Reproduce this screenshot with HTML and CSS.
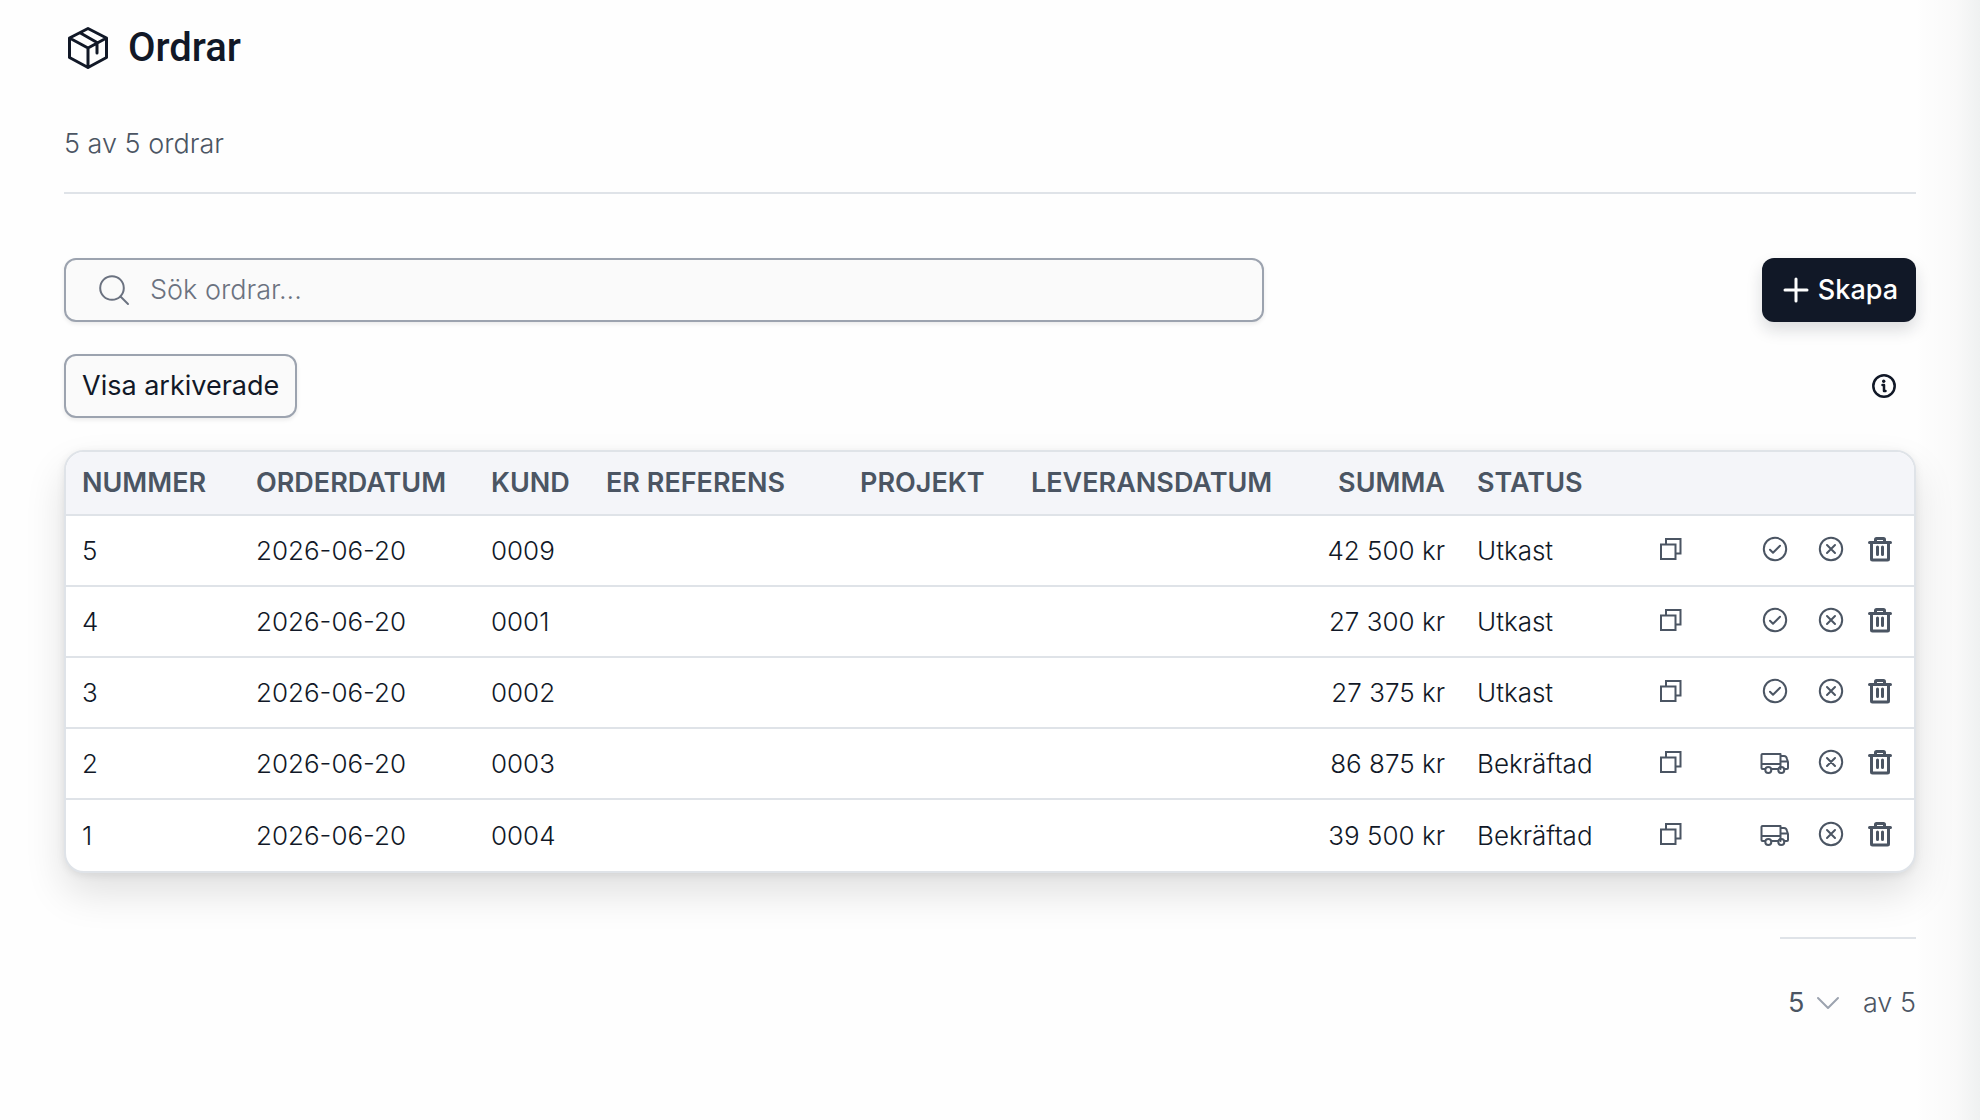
FILE: index.html
```html
<!DOCTYPE html>
<html lang="sv">
<head>
    <meta charset="UTF-8">
    <meta name="viewport" content="width=device-width, initial-scale=1.0">
    <title>Ordrar</title>
    <link rel="stylesheet" href="styles.css">
</head>
<body>
    <!-- Icon symbols shared by the rows -->
    <svg class="symbols" xmlns="http://www.w3.org/2000/svg">
        <symbol id="icon-copy" viewBox="0 0 24 24">
            <path d="M7 7V2h14.500v14.500H17M2 7.500h14.500V22H2z" />
        </symbol>
        <symbol id="icon-check" viewBox="0 0 26 26">
            <circle cx="13" cy="13" r="11.200" />
            <path d="M8 13.800l3 3 7-7" />
        </symbol>
        <symbol id="icon-cancel" viewBox="0 0 26 26">
            <circle cx="13" cy="13" r="11.200" />
            <path d="M9 9l8 8M17 9l-8 8" />
        </symbol>
        <symbol id="icon-truck" viewBox="0 0 30 26">
            <path d="M5 20H2.500a1 1 0 0 1-1-1V6a1 1 0 0 1 1-1h18v15M11.500 20h6.500M1.500 15h19M20.500 7h3.500q2.500 0 3 3l1 3v6a1 1 0 0 1-1 1h-2.500M20.500 12.500h7" />
            <circle cx="8.300" cy="21" r="3" />
            <circle cx="21.300" cy="21" r="3" />
        </symbol>
        <symbol id="icon-trash" viewBox="0 0 24 26">
            <path d="M1.500 6.500h21M3.500 7v16a1 1 0 0 0 1 1h15a1 1 0 0 0 1-1V7M7.500 6V3.500a1 1 0 0 1 1-1h7a1 1 0 0 1 1 1V6M9.500 11v7.500M14.500 11v7.500" />
        </symbol>
    </svg>

    <main class="page">
        <header class="page-header">
            <div class="title-row">
                <svg class="title-icon" viewBox="0 0 48 48">
                    <path d="M24 4.500L42.500 14v19.500L24 43.500L5.500 33.500V14zM5.500 14L24 24l18.500-10M24 24v19.500M16 8.700l17 9.800v10.500" />
                </svg>
                <h1 class="title">Ordrar</h1>
            </div>
            <p class="count">5 av 5 ordrar</p>
        </header>

        <!-- Search and create -->
        <div class="toolbar">
            <label class="search">
                <svg class="search-icon" viewBox="0 0 32 32">
                    <circle cx="14" cy="14" r="11.800" />
                    <path d="M22.500 22.500l7.500 7.500" />
                </svg>
                <input class="search-input" type="search" placeholder="Sök ordrar..." aria-label="Sök ordrar">
            </label>
            <button class="button primary" type="button">
                <svg class="plus-icon" viewBox="0 0 28 28">
                    <path d="M14 3v22M3 14h22" />
                </svg>
                Skapa
            </button>
        </div>

        <!-- Filters -->
        <div class="toolbar">
            <button class="button outline" type="button">Visa arkiverade</button>
            <button class="info" type="button" aria-label="Information">
                <svg class="info-icon" viewBox="0 0 24 24">
                    <circle cx="12" cy="12" r="10.700" />
                    <path d="M10.500 11h1.500v6h1.500" />
                    <circle class="dot" cx="11.700" cy="7.200" r="1.700" />
                </svg>
            </button>
        </div>

        <!-- Orders -->
        <div class="table-card">
            <table class="orders">
                <colgroup>
                    <col class="col-number">
                    <col class="col-date">
                    <col class="col-customer">
                    <col class="col-reference">
                    <col class="col-project">
                    <col class="col-delivery">
                    <col class="col-sum">
                    <col class="col-status">
                    <col class="col-actions">
                </colgroup>
                <thead>
                    <tr>
                        <th scope="col">Nummer</th>
                        <th scope="col">Orderdatum</th>
                        <th scope="col">Kund</th>
                        <th scope="col">Er referens</th>
                        <th scope="col">Projekt</th>
                        <th scope="col">Leveransdatum</th>
                        <th scope="col" class="sum">Summa</th>
                        <th scope="col">Status</th>
                        <td></td>
                    </tr>
                </thead>
                <tbody>
                    <tr>
                        <td>5</td>
                        <td>2026-06-20</td>
                        <td>0009</td>
                        <td></td>
                        <td></td>
                        <td></td>
                        <td class="sum">42 500 kr</td>
                        <td>Utkast</td>
                        <td class="actions-cell">
                            <div class="actions">
                                <button class="action copy" type="button" aria-label="Kopiera"><svg class="icon-copy"><use href="#icon-copy" /></svg></button>
                                <button class="action" type="button" aria-label="Bekräfta"><svg class="icon-round"><use href="#icon-check" /></svg></button>
                                <button class="action" type="button" aria-label="Avbryt"><svg class="icon-round"><use href="#icon-cancel" /></svg></button>
                                <button class="action trash" type="button" aria-label="Ta bort"><svg class="icon-trash"><use href="#icon-trash" /></svg></button>
                            </div>
                        </td>
                    </tr>
                    <tr>
                        <td>4</td>
                        <td>2026-06-20</td>
                        <td>0001</td>
                        <td></td>
                        <td></td>
                        <td></td>
                        <td class="sum">27 300 kr</td>
                        <td>Utkast</td>
                        <td class="actions-cell">
                            <div class="actions">
                                <button class="action copy" type="button" aria-label="Kopiera"><svg class="icon-copy"><use href="#icon-copy" /></svg></button>
                                <button class="action" type="button" aria-label="Bekräfta"><svg class="icon-round"><use href="#icon-check" /></svg></button>
                                <button class="action" type="button" aria-label="Avbryt"><svg class="icon-round"><use href="#icon-cancel" /></svg></button>
                                <button class="action trash" type="button" aria-label="Ta bort"><svg class="icon-trash"><use href="#icon-trash" /></svg></button>
                            </div>
                        </td>
                    </tr>
                    <tr>
                        <td>3</td>
                        <td>2026-06-20</td>
                        <td>0002</td>
                        <td></td>
                        <td></td>
                        <td></td>
                        <td class="sum">27 375 kr</td>
                        <td>Utkast</td>
                        <td class="actions-cell">
                            <div class="actions">
                                <button class="action copy" type="button" aria-label="Kopiera"><svg class="icon-copy"><use href="#icon-copy" /></svg></button>
                                <button class="action" type="button" aria-label="Bekräfta"><svg class="icon-round"><use href="#icon-check" /></svg></button>
                                <button class="action" type="button" aria-label="Avbryt"><svg class="icon-round"><use href="#icon-cancel" /></svg></button>
                                <button class="action trash" type="button" aria-label="Ta bort"><svg class="icon-trash"><use href="#icon-trash" /></svg></button>
                            </div>
                        </td>
                    </tr>
                    <tr>
                        <td>2</td>
                        <td>2026-06-20</td>
                        <td>0003</td>
                        <td></td>
                        <td></td>
                        <td></td>
                        <td class="sum">86 875 kr</td>
                        <td>Bekräftad</td>
                        <td class="actions-cell">
                            <div class="actions">
                                <button class="action copy" type="button" aria-label="Kopiera"><svg class="icon-copy"><use href="#icon-copy" /></svg></button>
                                <button class="action" type="button" aria-label="Leverera"><svg class="icon-truck"><use href="#icon-truck" /></svg></button>
                                <button class="action" type="button" aria-label="Avbryt"><svg class="icon-round"><use href="#icon-cancel" /></svg></button>
                                <button class="action trash" type="button" aria-label="Ta bort"><svg class="icon-trash"><use href="#icon-trash" /></svg></button>
                            </div>
                        </td>
                    </tr>
                    <tr>
                        <td>1</td>
                        <td>2026-06-20</td>
                        <td>0004</td>
                        <td></td>
                        <td></td>
                        <td></td>
                        <td class="sum">39 500 kr</td>
                        <td>Bekräftad</td>
                        <td class="actions-cell">
                            <div class="actions">
                                <button class="action copy" type="button" aria-label="Kopiera"><svg class="icon-copy"><use href="#icon-copy" /></svg></button>
                                <button class="action" type="button" aria-label="Leverera"><svg class="icon-truck"><use href="#icon-truck" /></svg></button>
                                <button class="action" type="button" aria-label="Avbryt"><svg class="icon-round"><use href="#icon-cancel" /></svg></button>
                                <button class="action trash" type="button" aria-label="Ta bort"><svg class="icon-trash"><use href="#icon-trash" /></svg></button>
                            </div>
                        </td>
                    </tr>
                </tbody>
            </table>
        </div>

        <!-- Page size -->
        <footer class="pager">
            <div class="page-size">
                <select class="page-select" aria-label="Antal per sida">
                    <option>5</option>
                </select>
                <svg class="chevron" viewBox="0 0 24 16">
                    <path d="M2 3l10 10L22 3" />
                </svg>
            </div>
            <span>av 5</span>
        </footer>
    </main>
</body>
</html>
```
FILE: styles.css
```css
* {
    margin: 0;
    padding: 0;
    box-sizing: border-box;
}

body {
    min-height: 100vh;
    font-family: Inter, "Open Sans", sans-serif;
    font-size: 27px;
    font-weight: 300;
    line-height: 32px;
    color: #111827;
    background: linear-gradient(to left, #eff1f1, #f9f9f9 24px, #fefefe 64px);
}

button, input, select {
    font: inherit;
    color: inherit;
    border: none;
    background: none;
}

button {
    cursor: pointer;
}

svg {
    fill: none;
    stroke: currentColor;
    stroke-width: 2;
    stroke-linecap: round;
    stroke-linejoin: round;
    flex-shrink: 0;
}

.symbols {
    display: none;
}

.page {
    padding: 16px 64px;
}

/* Header */
.page-header {
    padding-bottom: 32px;
    border-bottom: 2px solid #dfe3e8;
    margin-bottom: 64px;
}

.title-row {
    display: flex;
    align-items: center;
    gap: 16px;
    height: 64px;
    margin-bottom: 48px;
}

.title-icon {
    width: 48px;
    height: 48px;
    stroke-width: 3;
}

.title {
    font-family: Roboto, sans-serif;
    font-size: 40px;
    font-weight: 500;
    line-height: 48px;
}

.count {
    color: #4b5563;
}

/* Toolbars */
.toolbar {
    display: flex;
    justify-content: space-between;
    align-items: center;
    margin-bottom: 32px;
}

.search {
    display: flex;
    align-items: center;
    gap: 20px;
    flex: 1;
    max-width: 1200px;
    height: 64px;
    padding: 0 32px;
    border: 2px solid #9ca3af;
    border-radius: 12px;
    background-color: #fafafa;
    box-shadow: 0 2px 4px rgba(0, 0, 0, 0.08);
}

.search-icon {
    width: 32px;
    height: 32px;
    color: #6b7280;
}

.search-input {
    flex: 1;
    min-width: 0;
    outline: none;
}

.search-input::placeholder {
    color: #6b7280;
}

.button {
    display: flex;
    align-items: center;
    gap: 8px;
    height: 64px;
    padding: 0 16px;
    border-radius: 12px;
    font-weight: 400;
}

.primary {
    padding: 0 18px 0 20px;
    background-color: #111827;
    color: white;
    font-weight: 500;
    box-shadow: 0 8px 16px rgba(17, 24, 39, 0.15);
}

.plus-icon {
    width: 28px;
    height: 28px;
    stroke-width: 3;
}

.outline {
    border: 2px solid #9ca3af;
    background-color: #fafafa;
    box-shadow: 0 2px 4px rgba(0, 0, 0, 0.08);
}

.info {
    display: flex;
    padding: 20px;
}

.info-icon {
    width: 24px;
    height: 24px;
    stroke-width: 2.5;
}

.dot {
    fill: currentColor;
    stroke: none;
}

/* Orders table */
.table-card {
    border: 2px solid #dfe3e8;
    border-radius: 20px;
    background-color: white;
    overflow: hidden;
    box-shadow: 0 2px 8px rgba(0, 0, 0, 0.08), 0 20px 40px rgba(0, 0, 0, 0.12);
}

.orders {
    width: 100%;
    table-layout: fixed;
    border-spacing: 0;
    white-space: nowrap;
}

.orders th,
.orders td {
    height: 71px;
    padding: 0 16px;
    font-size: 26px;
    text-align: left;
    border-bottom: 2px solid #dfe3e8;
}

.orders thead th,
.orders thead td {
    height: 64px;
    background-color: #f4f5f9;
    color: #4b5563;
    font-size: 27px;
    font-weight: 600;
    text-transform: uppercase;
}

.orders tbody tr:last-child td {
    border-bottom: none;
}

.orders .sum {
    text-align: right;
}

.col-number { width: 174px; }
.col-date { width: 235px; }
.col-customer { width: 115px; }
.col-reference { width: 254px; }
.col-project { width: 171px; }
.col-delivery { width: 280px; }
.col-sum { width: 166px; }
.col-status { width: 172px; }

.orders .actions-cell {
    padding: 0 13px 0 0;
}

.actions {
    display: flex;
    justify-content: flex-end;
    padding-bottom: 4px;
    color: #4b5563;
}

.action {
    display: flex;
    align-items: center;
    justify-content: center;
    width: 56px;
    height: 48px;
}

.copy {
    margin-right: 48px;
}

.trash {
    width: 42px;
}

.icon-copy {
    width: 24px;
    height: 24px;
    stroke-linecap: butt;
    stroke-linejoin: miter;
}

.icon-round {
    width: 26px;
    height: 26px;
}

.icon-truck {
    width: 30px;
    height: 26px;
}

.icon-trash {
    width: 24px;
    height: 26px;
    stroke-width: 3;
}

/* Page size */
.pager {
    display: flex;
    justify-content: space-between;
    width: 136px;
    margin: 64px 0 0 auto;
    padding: 48px 0 48px 8px;
    border-top: 2px solid #dfe3e8;
    color: #4b5563;
}

.page-size {
    display: flex;
    align-items: center;
    position: relative;
}

.page-select {
    width: 56px;
    appearance: none;
    outline: none;
    font-weight: 400;
}

.chevron {
    position: absolute;
    right: 4px;
    width: 24px;
    height: 16px;
    color: #9ca3af;
    pointer-events: none;
}
```
